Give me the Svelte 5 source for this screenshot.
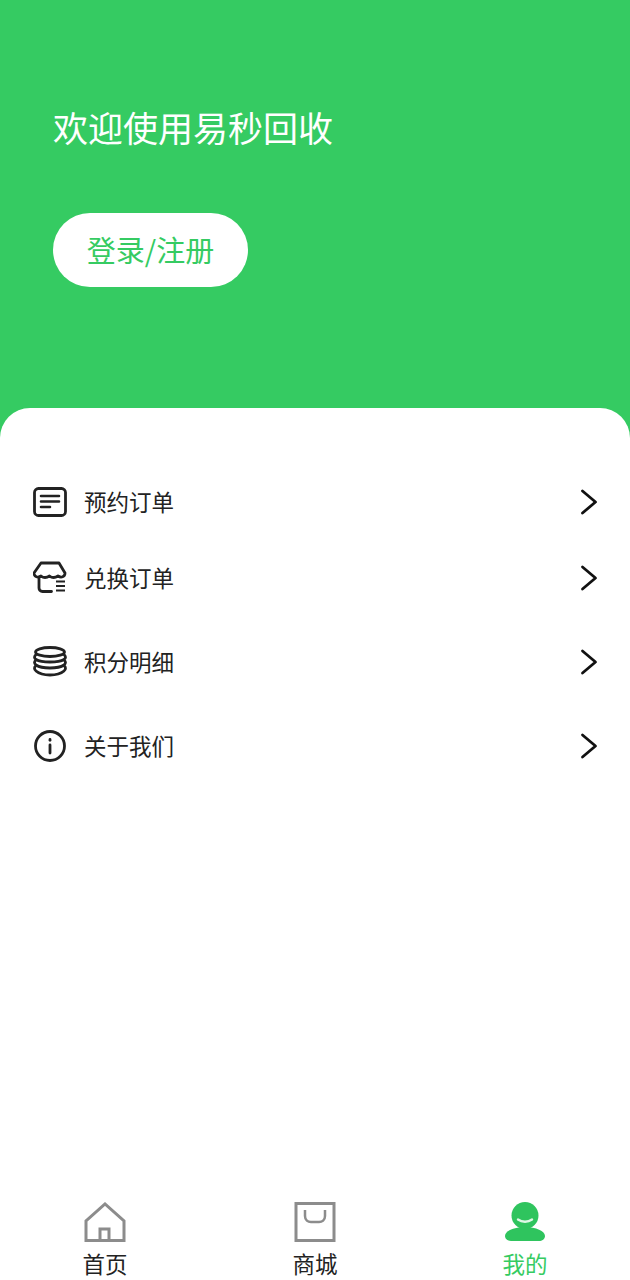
<script>
	const rows = [
		{ label: '预约订单', icon: 'order', height: 76 },
		{ label: '兑换订单', icon: 'shop', height: 76 },
		{ label: '积分明细', icon: 'coins', height: 92 },
		{ label: '关于我们', icon: 'info', height: 76 }
	];
</script>

<div class="page">
	<header class="hero">
		<h1>欢迎使用易秒回收</h1>
		<button class="login">登录/注册</button>
	</header>

	<main class="sheet">
		{#each rows as row}
			<div class="row" style="height: {row.height}px">
				<svg class="row-icon" viewBox="0 0 34 34" fill="none" stroke="#222" stroke-width="2.800" stroke-linecap="round" stroke-linejoin="round">
					{#if row.icon === 'order'}
						<rect x="1.500" y="3.500" width="31" height="27" rx="4" />
						<path d="M8 11h18M8 16.500h18M8 22h9" stroke-width="2.600" />
					{:else if row.icon === 'shop'}
						<path d="M8 2h18l6 10c0 4-4 5-7 3-3 2-6 2-8.500 0-3 2-6 2-8.500 0-3 2-7 1-7-3z" />
						<path d="M6 17.500v9.500c0 2 1.500 3.500 3.500 3.500h9" />
						<path d="M23 20.500h9M23 25h9M23 29.500h9" stroke-width="2.200" stroke-linecap="butt" />
					{:else if row.icon === 'coins'}
						<ellipse cx="17" cy="7" rx="14.500" ry="4.500" />
						<path d="M3 9.500c-2 2-2 3.500 0 5 3 1.800 8 2.500 14 2.500s11-.7 14-2.500c2-1.500 2-3 0-5" />
						<path d="M3 15c-2 1.800-2 3.500 0 5 3 2 8 3 14 3s11-1 14-3c2-1.500 2-3.200 0-5" />
						<path d="M3 20.500c-2 1.800-2 4 0 5.500 3 2.500 8 4 14 4s11-1.500 14-4c2-1.500 2-3.700 0-5.500" />
					{:else}
						<circle cx="17" cy="17" r="14.500" />
						<path d="M17 16v8" />
						<path d="M17 10.500v.8" />
					{/if}
				</svg>
				<span class="row-label">{row.label}</span>
				<svg class="chevron" viewBox="0 0 18 26" fill="none" stroke="#111" stroke-width="2.800" stroke-linecap="round" stroke-linejoin="round">
					<path d="M2.500 2l13 11-13 11" />
				</svg>
			</div>
		{/each}
	</main>

	<nav class="tabs">
		<div class="tab">
			<svg viewBox="0 0 42 40" fill="none" stroke="#8c8c8c" stroke-width="3">
				<path d="M2 38.500V19L21 2l19 17v19.500z" />
				<path d="M16 38.500V27h9v11.500" />
			</svg>
			<span>首页</span>
		</div>
		<div class="tab">
			<svg viewBox="0 0 42 40" fill="none" stroke="#8c8c8c" stroke-width="3">
				<rect x="2" y="1.500" width="38" height="37" />
				<path d="M11 8v6c0 4 3 6 6 6h8c3 0 6-2 6-6V8" stroke-width="2.500" />
			</svg>
			<span>商城</span>
		</div>
		<div class="tab active">
			<svg viewBox="0 0 42 40">
				<circle cx="21" cy="13.500" r="13.500" fill="#2fc45e" />
				<path d="M1 34c0-5 9-9 20-9s20 4 20 9c0 3-3 5-6 5H7c-3 0-6-2-6-5z" fill="#2fc45e" />
				<path d="M14 17.500c4 3 10 3 14 0" fill="none" stroke="#dff7e6" stroke-width="2.400" stroke-linecap="round" />
			</svg>
			<span>我的</span>
		</div>
	</nav>
</div>

<style>
	:global(body) {
		margin: 0;
	}

	.page {
		width: 630px;
		height: 1280px;
		display: flex;
		flex-direction: column;
		background: #35cb62;
		font-family: 'Noto Sans CJK SC', 'Liberation Sans', sans-serif;
		overflow: hidden;
	}

	.hero {
		height: 408px;
		flex-shrink: 0;
		box-sizing: border-box;
		padding: 103px 0 0 53px;
	}

	h1 {
		margin: 0;
		height: 110px;
		font-size: 35px;
		line-height: 48px;
		font-weight: 400;
		color: #fff;
	}

	.login {
		display: block;
		width: 195px;
		height: 74px;
		padding: 0 0 3px;
		border: none;
		border-radius: 37px;
		background: #fff;
		color: #35cb62;
		font: inherit;
		font-size: 29px;
	}

	.sheet {
		flex: 1;
		background: #fff;
		border-radius: 30px 30px 0 0;
		padding-top: 56px;
	}

	.row {
		display: flex;
		align-items: center;
		padding: 0 32px 0 33px;
	}

	.row-icon {
		width: 34px;
		height: 34px;
		flex-shrink: 0;
	}

	.row-label {
		flex: 1;
		margin: 0 0 2px 17px;
		font-size: 22.500px;
		color: #222;
	}

	.chevron {
		width: 18px;
		height: 26px;
	}

	.tabs {
		height: 90px;
		flex-shrink: 0;
		display: grid;
		grid-template-columns: repeat(3, 210px);
		background: #fff;
	}

	.tab {
		display: flex;
		flex-direction: column;
		align-items: center;
		padding-top: 12px;
		font-size: 22.500px;
		line-height: 32px;
		color: #222;
	}

	.tab svg {
		width: 42px;
		height: 40px;
		flex-shrink: 0;
	}

	.tab span {
		margin-top: 5px;
	}

	.tab.active {
		color: #35cb62;
	}
</style>
